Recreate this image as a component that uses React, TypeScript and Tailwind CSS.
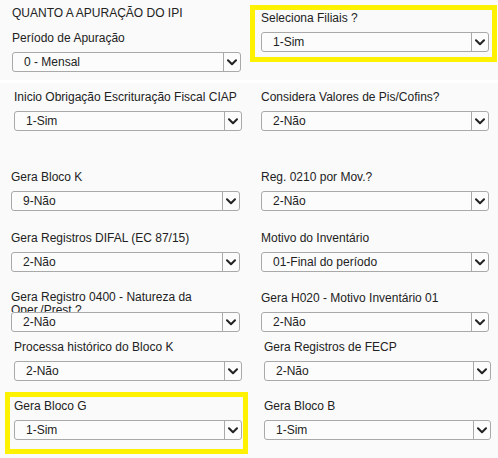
import React from 'react';

type FieldProps = {
  label: string;
  value: string;
  w: string;
  twoLine?: boolean;
};

function Chevron() {
  return (
    <svg width="10" height="7" viewBox="0 0 10 7" fill="none">
      <path d="M1 1.2 L5 5.2 L9 1.2" stroke="#222" strokeWidth="2" strokeLinecap="round" strokeLinejoin="round" />
    </svg>
  );
}

function Select({ value, w }: { value: string; w: string }) {
  return (
    <div className={`relative z-10 flex h-[20px] ${w} items-stretch rounded-[3px] border border-[#a9a9a9] bg-[#fcfcfc]`}>
      <div className="flex flex-1 items-center pl-[11px] text-[12px] text-[#222]">{value}</div>
      <div className="flex w-[17px] items-center justify-center border-l border-[#a9a9a9]">
        <Chevron />
      </div>
    </div>
  );
}

function Field({ label, value, w, twoLine }: FieldProps) {
  return (
    <div className="flex flex-col">
      {twoLine ? (
        <div className="h-[23px] overflow-hidden pt-[2px] text-[12px] leading-[13px] text-[#222]">
          <div>{label}</div>
          <div>Oper./Prest.?</div>
        </div>
      ) : (
        <div className="h-[16px] whitespace-nowrap text-[12px] leading-[16px] text-[#222]">{label}</div>
      )}
      <div className={twoLine ? 'mt-0' : 'mt-[6px]'}>
        <Select value={value} w={w} />
      </div>
    </div>
  );
}

export default function App() {
  return (
    <div className="h-[458px] w-[498px] overflow-hidden bg-[#fafafa]" style={{ fontFamily: '"Liberation Sans", Arial, sans-serif' }}>
      {/* Quanto a apuração */}
      <div className="flex h-[80px]">
        <div className="w-[250px] pl-[11px] pt-[5px]">
          <div className="h-[16px] pl-[1px] text-[12px] leading-[16px] text-[#222]">QUANTO A APURAÇÃO DO IPI</div>
          <div className="mt-[9px] pl-[1px]">
            <Field label="Período de Apuração" value="0 - Mensal" w="w-[229px]" />
          </div>
        </div>
        <div className="pt-[5px]">
          <div className="h-[57px] w-[247px] border-[5px] border-[#fff200] pl-[6px]">
            <Field label="Seleciona Filiais ?" value="1-Sim" w="w-[228px]" />
          </div>
        </div>
      </div>
      <div className="h-[3px] bg-white" />

      {/* Row 2 */}
      <div className="flex h-[80px] pt-[6px]">
        <div className="w-[250px] pl-[14px]">
          <Field label="Inicio Obrigação Escrituração Fiscal CIAP" value="1-Sim" w="w-[228px]" />
        </div>
        <div className="pl-[11px]">
          <Field label="Considera Valores de Pis/Cofins?" value="2-Não" w="w-[228px]" />
        </div>
      </div>

      {/* Row 3 */}
      <div className="flex h-[61px] pt-[6px]">
        <div className="w-[250px] pl-[11px]">
          <Field label="Gera Bloco K" value="9-Não" w="w-[229px]" />
        </div>
        <div className="pl-[11px]">
          <Field label="Reg. 0210 por Mov.?" value="2-Não" w="w-[228px]" />
        </div>
      </div>

      {/* Row 4 */}
      <div className="flex h-[59px] pt-[6px]">
        <div className="w-[250px] pl-[11px]">
          <Field label="Gera Registros DIFAL (EC 87/15)" value="2-Não" w="w-[229px]" />
        </div>
        <div className="pl-[11px]">
          <Field label="Motivo do Inventário" value="01-Final do período" w="w-[228px]" />
        </div>
      </div>

      {/* Row 5 */}
      <div className="flex h-[49px] pt-[6px]">
        <div className="w-[250px] pl-[11px]">
          <Field label="Gera Registro 0400 - Natureza da" value="2-Não" w="w-[229px]" twoLine />
        </div>
        <div className="pl-[11px] pt-[1px]">
          <Field label="Gera H020 - Motivo Inventário 01" value="2-Não" w="w-[228px]" />
        </div>
      </div>

      {/* Row 6 */}
      <div className="flex h-[60px] pt-[7px]">
        <div className="w-[250px] pl-[14px]">
          <Field label="Processa histórico do Bloco K" value="2-Não" w="w-[228px]" />
        </div>
        <div className="pl-[14px]">
          <Field label="Gera Registros de FECP" value="2-Não" w="w-[227px]" />
        </div>
      </div>

      {/* Row 7 */}
      <div className="flex">
        <div className="w-[250px] pl-[5px]">
          <div className="h-[62px] w-[243px] border-[5px] border-[#fff200] pl-[4px] pt-[1px]">
            <Field label="Gera Bloco G" value="1-Sim" w="w-[228px]" />
          </div>
        </div>
        <div className="pl-[14px] pt-[6px]">
          <Field label="Gera Bloco B" value="1-Sim" w="w-[227px]" />
        </div>
      </div>
    </div>
  );
}
